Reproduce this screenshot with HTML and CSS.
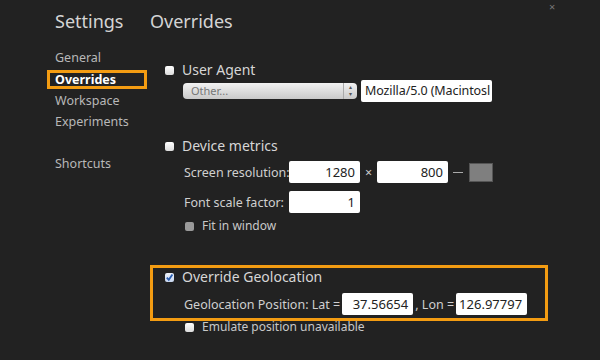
FILE: index.html
```html
<!DOCTYPE html>
<html lang="en">
<head>
    <meta charset="UTF-8">
    <title>Settings</title>
    <link rel="stylesheet" href="styles.css">
</head>
<body>
    <div class="close">×</div>
    <div class="page">
        <div class="sidebar">
            <h1>Settings</h1>
            <ul class="tabs">
                <li>General</li>
                <li class="active">Overrides</li>
                <li>Workspace</li>
                <li>Experiments</li>
                <li class="gap">Shortcuts</li>
            </ul>
        </div>

        <div class="main">
            <h1>Overrides</h1>

            <div class="section">
                <div class="title"><span class="box"></span>User Agent</div>
                <div class="row ua">
                    <div class="select">Other...<span class="arrows">&#9652;<br>&#9662;</span></div>
                    <div class="field text">Mozilla/5.0 (Macintosl</div>
                </div>
            </div>

            <div class="section metrics">
                <div class="title"><span class="box"></span>Device metrics</div>
                <div class="row">
                    <span class="label">Screen resolution:</span>
                    <div class="field num">1280</div>
                    <span class="sep">×</span>
                    <div class="field num">800</div>
                    <span class="dash"></span>
                    <span class="swap"></span>
                </div>
                <div class="row">
                    <span class="label">Font scale factor:</span>
                    <div class="field num">1</div>
                </div>
                <div class="small"><span class="box gray"></span>Fit in window</div>
            </div>

            <div class="section geo">
                <div class="title"><span class="box checked"><svg width="9" height="9" viewBox="0 0 9 9"><path d="M1.8 4.6 L3.8 6.8 L7.4 1.6" fill="none" stroke="#2a5db0" stroke-width="1.8"/></svg></span>Override Geolocation</div>
                <div class="row">
                    <span class="label">Geolocation Position: Lat =</span>
                    <div class="field num">37.56654</div>
                    <span class="label lon">, Lon =</span>
                    <div class="field num">126.97797</div>
                </div>
            </div>
            <div class="small emulate"><span class="box"></span>Emulate position unavailable</div>
        </div>
    </div>
</body>
</html>
```

FILE: styles.css
```css
* {
    margin: 0;
    padding: 0;
    box-sizing: border-box;
}

body {
    font-family: 'Noto Sans', 'DejaVu Sans', sans-serif;
    background: #222222;
    color: #cfcfcf;
    width: 600px;
    height: 360px;
    overflow: hidden;
    white-space: nowrap;
}

.close {
    position: absolute;
    top: 1px;
    left: 549px;
    color: #777;
    font-size: 11px;
    line-height: 12px;
}

.page {
    display: flex;
}

h1 {
    font-weight: normal;
    font-size: 18px;
    color: #d4d4d4;
    line-height: 22px;
}

.sidebar {
    width: 150px;
    padding: 10px 0 0 55px;
}

.tabs {
    list-style: none;
    margin-top: 15px;
    font-size: 12.5px;
    color: #b8b8b8;
}

.tabs li {
    height: 21.5px;
    line-height: 21px;
}

.tabs li.active {
    color: #fff;
    font-weight: bold;
    border: 3px solid #f39c12;
    margin-left: -8px;
    padding-left: 5px;
    width: 100px;
    height: 19px;
    line-height: 14px;
    margin-top: 1px;
    margin-bottom: 1px;
}

.tabs li.gap {
    margin-top: 20px;
}

.main {
    padding-top: 10px;
}

.main h1 {
    margin-bottom: 29px;
}

.section {
    padding-left: 15px;
}

.title {
    display: flex;
    align-items: center;
    font-size: 14px;
    line-height: 18px;
    color: #d6d6d6;
}

.box {
    display: inline-block;
    width: 9px;
    height: 9px;
    border-radius: 2px;
    background: linear-gradient(#ffffff, #dcdcdc);
    margin-right: 8px;
    flex-shrink: 0;
}

.box.gray {
    background: #9a9a9a;
}

.box.checked {
    background: linear-gradient(#eef3fb, #c7d6ee);
}

.box.checked svg {
    display: block;
}

.row {
    display: flex;
    align-items: center;
    margin-left: 19px;
    margin-top: 6px;
    font-size: 12.5px;
    color: #d0d0d0;
}

.row.ua {
    margin-left: 18px;
    margin-top: 1px;
}

.select {
    width: 174px;
    height: 16px;
    border-radius: 4px;
    background: linear-gradient(#f2f2f2, #c9c9c9);
    color: #777;
    font-size: 11px;
    line-height: 16px;
    padding-left: 8px;
    position: relative;
    margin-right: 4px;
}

.arrows {
    position: absolute;
    right: 0;
    top: 0;
    width: 14px;
    height: 16px;
    border-left: 1px solid #aaa;
    font-size: 6px;
    line-height: 7px;
    text-align: center;
    padding-top: 1px;
    color: #555;
}

.field {
    background: #fff;
    color: #222;
    border-radius: 2px;
    height: 22px;
    line-height: 22px;
    font-size: 13px;
}

.field.text {
    width: 131px;
    padding-left: 4px;
    overflow: hidden;
    font-size: 12.5px;
    letter-spacing: -0.1px;
}

.field.num {
    width: 71px;
    text-align: right;
    padding-right: 5px;
}

.label {
    width: 105px;
}

.sep {
    width: 17px;
    text-align: center;
    color: #ccc;
}

.dash {
    width: 10px;
    height: 1px;
    background: #aaa;
    margin: 0 6px 0 5px;
}

.swap {
    width: 24px;
    height: 19px;
    background: #7f7f7f;
    border: 1px solid #555;
}

.metrics {
    margin-top: 35px;
}

.metrics .row + .row {
    margin-top: 8px;
}

.small {
    display: flex;
    align-items: center;
    font-size: 12px;
    line-height: 16px;
    color: #c8c8c8;
    margin-left: 35px;
    margin-top: 5px;
}

.metrics .small {
    margin-left: 20px;
}

.geo {
    margin-top: 31px;
    width: 398px;
    height: 56px;
    border: 3px solid #f39c12;
    padding: 0 0 0 12px;
}

.geo .row {
    margin-top: 7px;
    margin-left: 19px;
}

.geo .label {
    width: auto;
    margin-right: 2px;
}

.geo .label.lon {
    margin-left: 2px;
}

.emulate {
    margin-top: -2px;
}
```
